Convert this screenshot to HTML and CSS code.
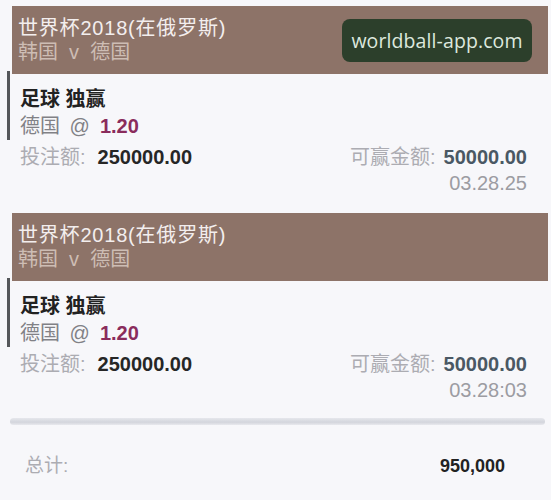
FILE: index.html
```html
<!DOCTYPE html>
<html lang="zh-CN">
<head>
<meta charset="utf-8">
<title>投注记录</title>
<link rel="stylesheet" href="styles.css">
</head>
<body>
<main class="slip">
  <section class="bet">
    <header class="bet-head">
      <div class="event">世界杯2018(在俄罗斯)</div>
      <div class="match">韩国&nbsp; v &nbsp;德国</div>
      <div class="watermark">worldball-app.com</div>
    </header>
    <div class="selection">
      <div class="market">足球 独赢</div>
      <div class="pick">德国 <span class="at">@</span><span class="odds">1.20</span></div>
    </div>
    <div class="stake">
      <div><span class="label">投注额:</span><span class="amount">250000.00</span></div>
      <div><span class="label">可赢金额:</span><span class="win">50000.00</span></div>
    </div>
    <div class="time">03.28.25</div>
  </section>

  <section class="bet">
    <header class="bet-head">
      <div class="event">世界杯2018(在俄罗斯)</div>
      <div class="match">韩国&nbsp; v &nbsp;德国</div>
    </header>
    <div class="selection">
      <div class="market">足球 独赢</div>
      <div class="pick">德国 <span class="at">@</span><span class="odds">1.20</span></div>
    </div>
    <div class="stake">
      <div><span class="label">投注额:</span><span class="amount">250000.00</span></div>
      <div><span class="label">可赢金额:</span><span class="win">50000.00</span></div>
    </div>
    <div class="time">03.28:03</div>
  </section>

  <div class="divider"></div>

  <div class="total">
    <span class="label">总计:</span>
    <span class="total-sum">950,000</span>
  </div>
</main>
</body>
</html>
```

FILE: styles.css
```css
html, body {
  margin: 0;
  padding: 0;
}

body {
  background: #f7f7fa;
  font-family: "Liberation Sans", "Noto Sans CJK SC", sans-serif;
  font-size: 20px;
  color: #2a2a2a;
  width: 551px;
  height: 500px;
  overflow: hidden;
}

.slip {
  padding-top: 6px;
}

.bet {
  margin: 0 3px 17px 12px;
}

.bet-head {
  position: relative;
  background: #8d7368;
  height: 68px;
  box-sizing: border-box;
  padding: 10px 0 0 6px;
  line-height: 24px;
}

.event {
  color: #f3eeee;
  letter-spacing: 0.8px;
}

.match {
  color: #cdbdb4;
}

.watermark {
  position: absolute;
  right: 16px;
  top: 13px;
  width: 190px;
  height: 43px;
  border-radius: 8px;
  background: #2c3f2b;
  color: #dde8de;
  font-family: "Open Sans", "DejaVu Sans", sans-serif;
  font-size: 19.5px;
  line-height: 43px;
  text-align: center;
  letter-spacing: 0.1px;
}

.selection {
  margin: -3px 0 0 -5px;
  border-left: 3px solid #55575a;
  padding: 15px 0 0 10px;
  line-height: 27px;
}

.market {
  font-weight: bold;
  color: #222;
}

.pick {
  color: #818186;
}

.at {
  margin: 0 10px 0 4px;
}

.odds {
  font-weight: bold;
  color: #8a2c5c;
}

.stake {
  display: flex;
  justify-content: space-between;
  margin-top: 3px;
  padding: 0 21px 0 8px;
  line-height: 28px;
}

.label {
  color: #acacb2;
  margin-right: 12px;
}

.stake > div:last-child .label {
  margin-right: 8px;
}

.amount {
  font-weight: bold;
  color: #262626;
}

.win {
  font-weight: bold;
  color: #4a5864;
}

.time {
  text-align: right;
  padding-right: 21px;
  color: #9c9ca2;
  line-height: 25px;
}

.divider {
  margin: -2px 6px 0 10px;
  height: 7px;
  border-radius: 4px;
  background: linear-gradient(#e6e7ec, #d3d5dc 60%, #e8e9ee);
}

.total {
  display: flex;
  justify-content: space-between;
  margin-top: 29px;
  padding: 0 46px 0 25px;
  font-size: 18px;
  line-height: 24px;
}

.total .label {
  font-size: 19px;
  margin-right: 0;
}

.total-sum {
  font-weight: bold;
  color: #222;
}
```
